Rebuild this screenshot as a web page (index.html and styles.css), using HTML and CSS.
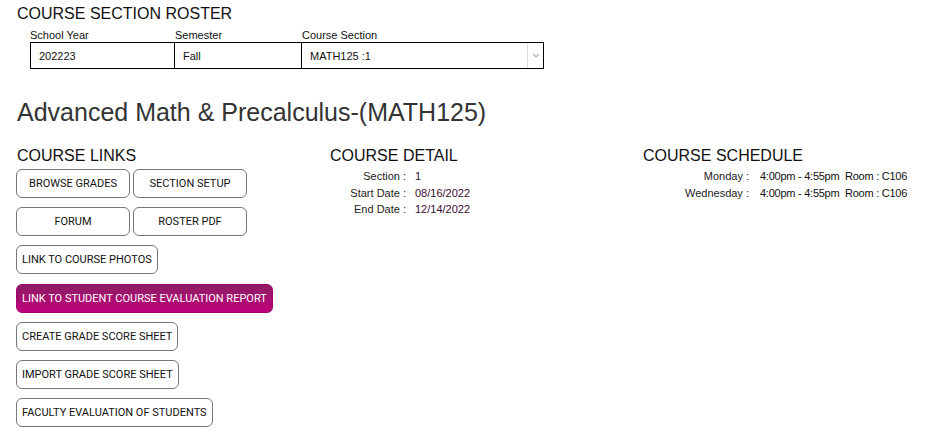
FILE: index.html
```html
<!DOCTYPE html>
<html>
<head>
<meta charset="utf-8">
<link rel="stylesheet" href="styles.css">
</head>
<body>
<div class="page">
  <h2 class="roster-title">COURSE SECTION ROSTER</h2>
  <div class="selector">
    <div class="sel-labels">
      <span class="lab lab-year">School Year</span>
      <span class="lab lab-sem">Semester</span>
      <span class="lab lab-sec">Course Section</span>
    </div>
    <div class="sel-box">
      <div class="cell cell-year">202223</div>
      <div class="cell cell-sem">Fall</div>
      <div class="cell cell-sec">
        <span>MATH125 :1</span>
        <span class="drop">
          <svg width="8" height="5" viewBox="0 0 8 5"><path d="M1 1 L4 4 L7 1" fill="none" stroke="#b0b0b0" stroke-width="1.2"/></svg>
        </span>
      </div>
    </div>
  </div>

  <h1 class="course-title">Advanced Math &amp; Precalculus-(MATH125)</h1>

  <div class="columns">
    <div class="col">
      <h3 class="col-title">COURSE LINKS</h3>
      <div class="links">
        <div class="pair">
          <a class="btn fixed">BROWSE GRADES</a>
          <a class="btn fixed">SECTION SETUP</a>
        </div>
        <div class="pair">
          <a class="btn fixed">FORUM</a>
          <a class="btn fixed">ROSTER PDF</a>
        </div>
        <a class="btn">LINK TO COURSE PHOTOS</a>
        <a class="btn active">LINK TO STUDENT COURSE EVALUATION REPORT</a>
        <a class="btn">CREATE GRADE SCORE SHEET</a>
        <a class="btn">IMPORT GRADE SCORE SHEET</a>
        <a class="btn">FACULTY EVALUATION OF STUDENTS</a>
      </div>
    </div>
    <div class="col">
      <h3 class="col-title">COURSE DETAIL</h3>
      <div class="info detail">
        <span class="k">Section :</span><span class="v">1</span>
        <span class="k">Start Date :</span><span class="v">08/16/2022</span>
        <span class="k">End Date :</span><span class="v">12/14/2022</span>
      </div>
    </div>
    <div class="col">
      <h3 class="col-title">COURSE SCHEDULE</h3>
      <div class="info schedule">
        <span class="k">Monday :</span><span class="v2">4:00pm - 4:55pm&nbsp;&nbsp;Room : C106</span>
        <span class="k">Wednesday :</span><span class="v2">4:00pm - 4:55pm&nbsp;&nbsp;Room : C106</span>
      </div>
    </div>
  </div>
</div>
</body>
</html>
```

FILE: styles.css
```css
* { box-sizing: border-box; }
html, body { margin: 0; padding: 0; background: #fff; }
body { font-family: "Liberation Sans", Arial, sans-serif; color: #111; }

.page { padding: 4px 0 0 17px; }

.roster-title {
  margin: 0;
  font-size: 16px;
  font-weight: normal;
  line-height: 20px;
  color: #111;
}

.selector { margin-left: 13px; width: 514px; }
.sel-labels { display: flex; height: 14px; margin-top: 4px; font-size: 11px; line-height: 14px; color: #111; }
.lab-year { width: 145px; }
.lab-sem { width: 127px; }

.sel-box {
  display: flex;
  height: 27px;
  border: 1px solid #000;
  font-size: 11px;
}
.cell { display: flex; align-items: center; padding-left: 8px; color: #111; }
.cell-year { width: 144px; border-right: 1px solid #000; }
.cell-sem { width: 127px; border-right: 1px solid #000; }
.cell-sec { flex: 1; justify-content: space-between; padding-right: 0; }
.drop {
  width: 16px; height: 100%;
  border-left: 1px solid #ddd;
  display: flex; align-items: center; justify-content: center;
}

.course-title {
  margin: 28px 0 0 0;
  font-size: 25px;
  font-weight: normal;
  line-height: 30px;
  color: #333;
}

.columns {
  display: grid;
  grid-template-columns: 313px 313px 1fr;
  margin-top: 19px;
}
.col-title {
  margin: 0;
  font-size: 16px;
  font-weight: normal;
  line-height: 20px;
  color: #111;
}

.links { display: flex; flex-direction: column; align-items: flex-start; gap: 9.2px; margin-top: 3px; margin-left: -1px; }
.pair { display: flex; gap: 3px; }
.btn {
  display: flex;
  align-items: center;
  height: 29px;
  padding: 0 5px;
  border: 1px solid #777;
  border-radius: 6px;
  background: #fff;
  font-family: Roboto, "Liberation Sans", sans-serif;
  font-size: 11px;
  color: #111;
  white-space: nowrap;
}
.btn.fixed { width: 114px; justify-content: center; }
.btn.active {
  border-color: #a4006c;
  background: linear-gradient(#8c1e63, #c2007c);
  color: #fff;
}

.info {
  display: grid;
  font-size: 11px;
  line-height: 16.5px;
  margin-top: 2px;
  row-gap: 0;
}
.detail { grid-template-columns: 76px auto; column-gap: 9px; justify-content: start; }
.schedule { grid-template-columns: 106px auto; column-gap: 11px; justify-content: start; }
.k { text-align: right; color: #222; white-space: nowrap; }
.v { color: #3a0b35; }
.v2 { color: #111; white-space: nowrap; letter-spacing: -0.25px; }
```
